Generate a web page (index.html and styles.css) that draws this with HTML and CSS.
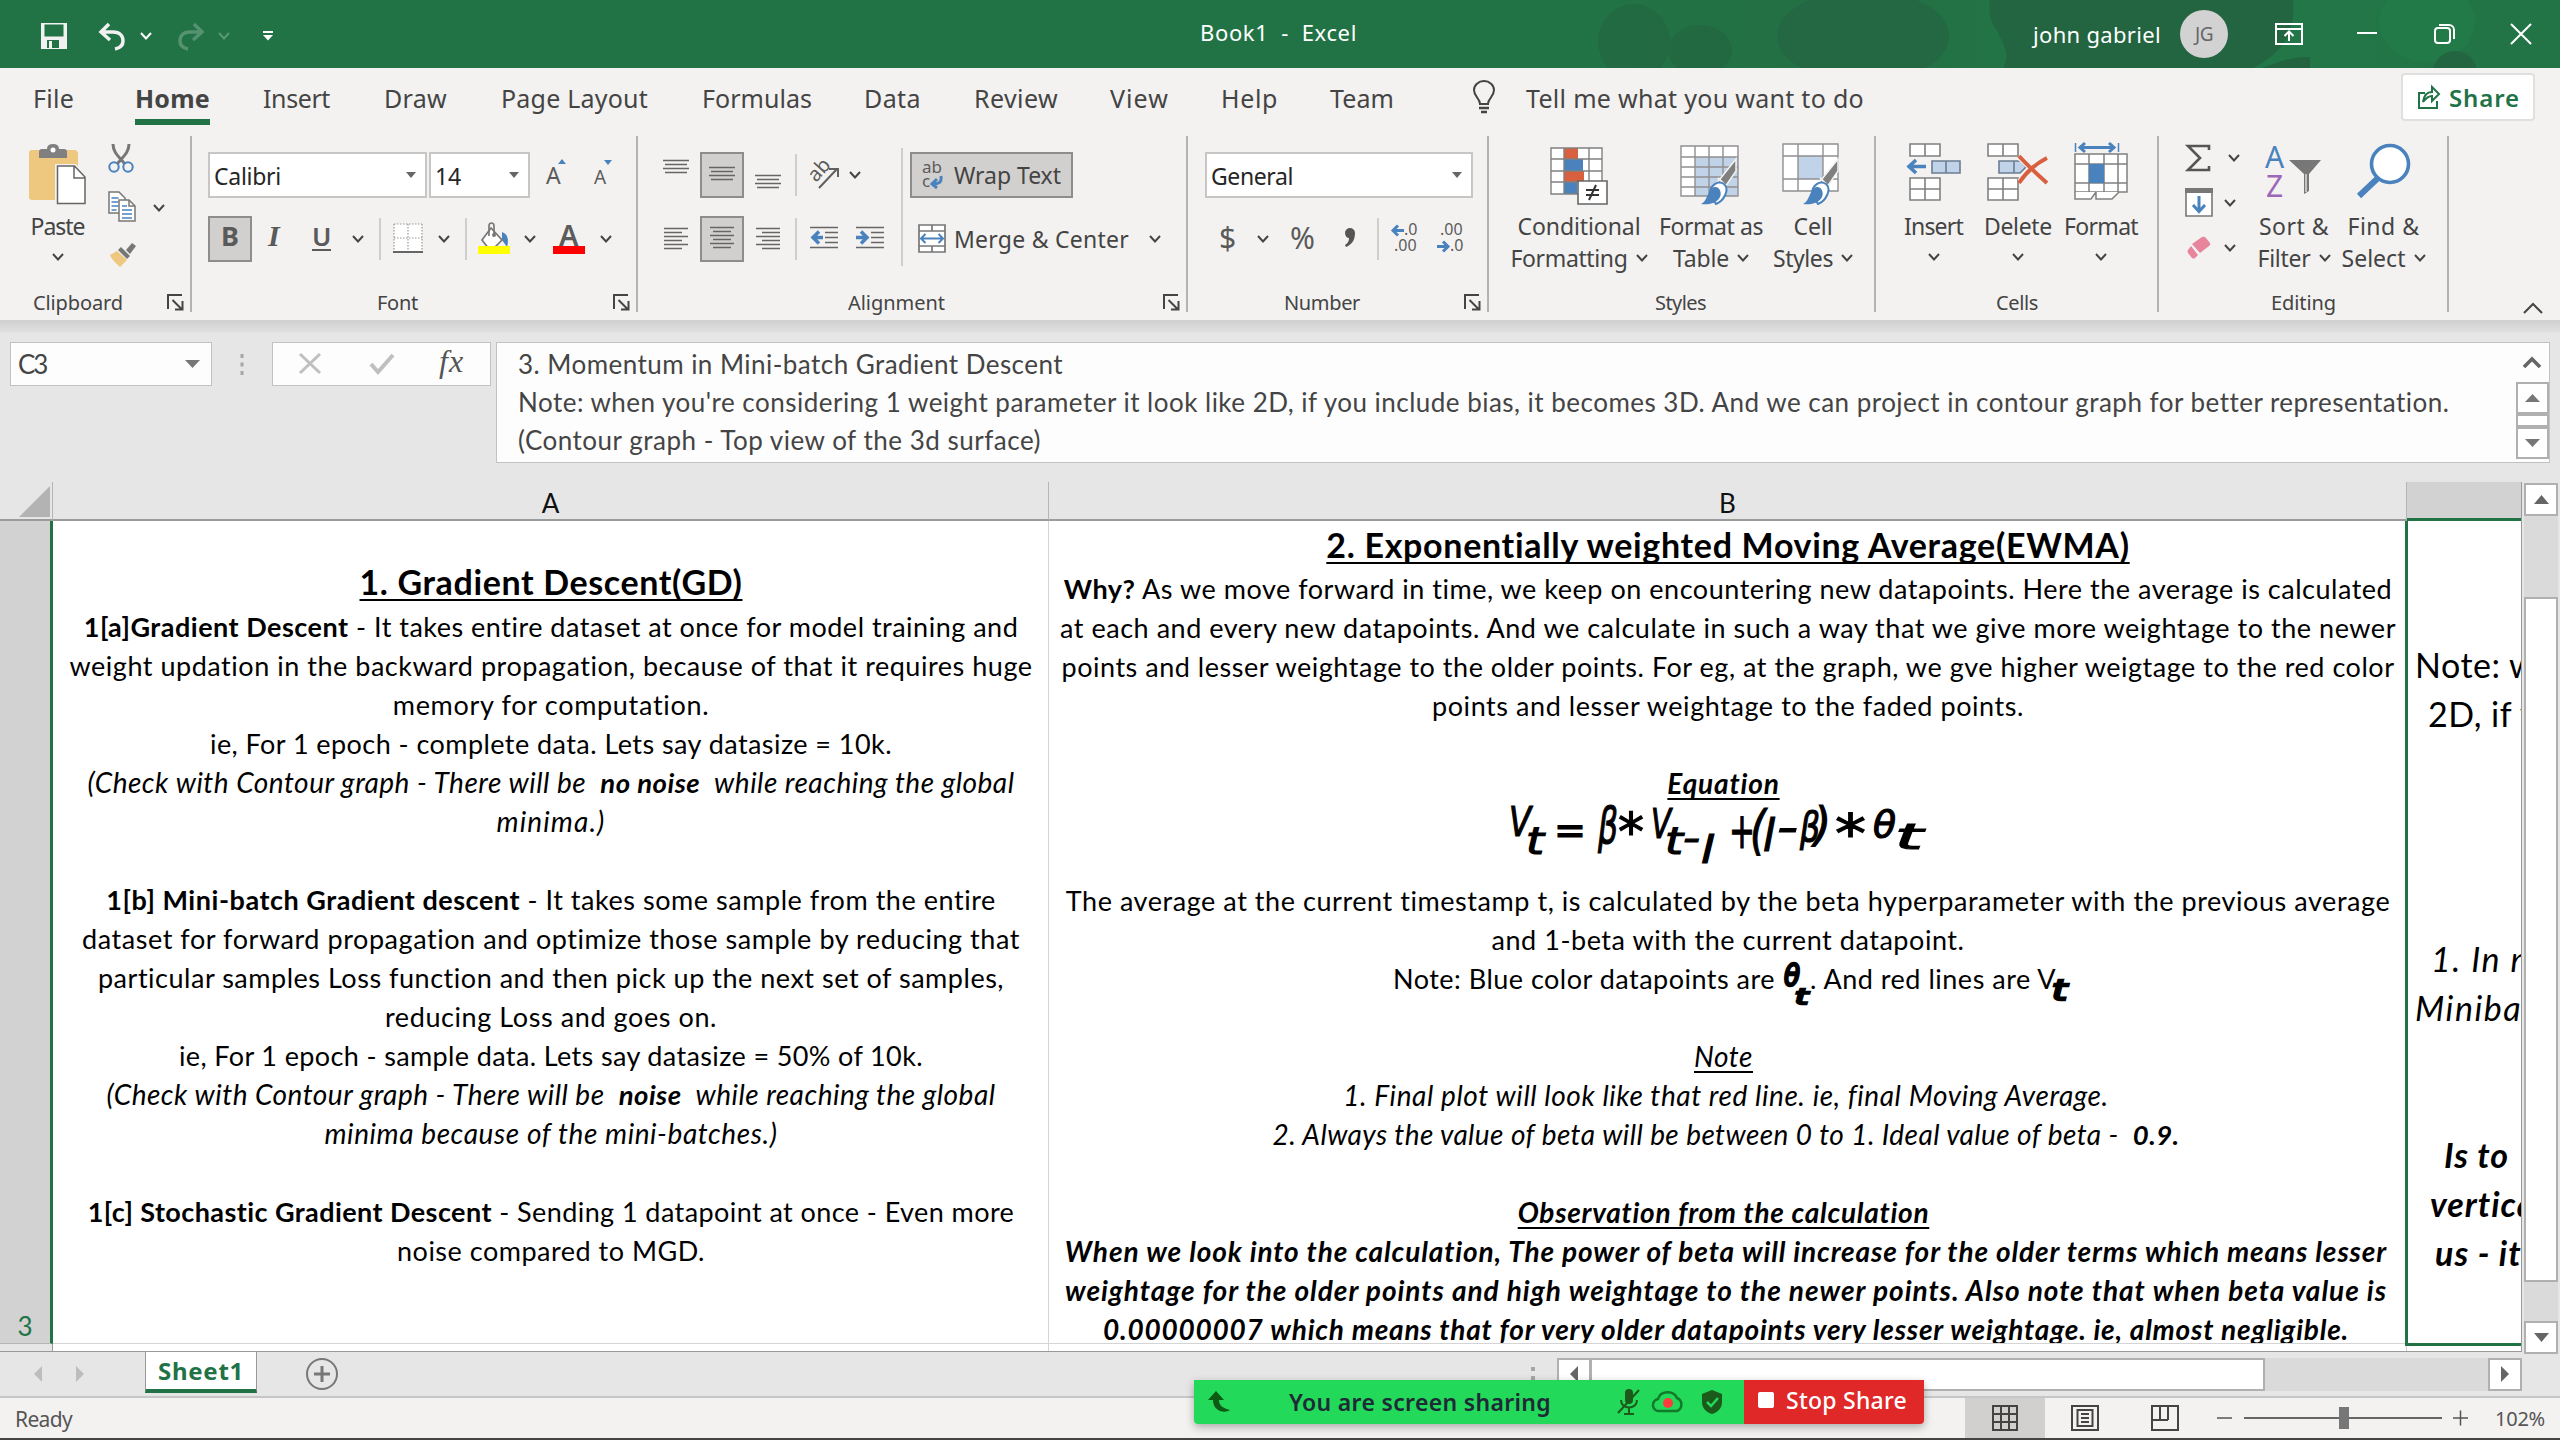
FILE: index.html
```html
<!DOCTYPE html>
<html lang="en">
<head>
<meta charset="utf-8">
<title>Book1 - Excel</title>
<link rel="stylesheet" href="styles.css">
</head>
<body>
<svg class="defs" width="0" height="0" aria-hidden="true">
  <symbol id="chev" viewBox="0 0 12 8"><path d="M1 1l5 5.5L11 1" fill="none" stroke="currentColor" stroke-width="2"/></symbol>
  <symbol id="tri" viewBox="0 0 10 6"><path d="M0 0h10L5 6z" fill="currentColor"/></symbol>
  <symbol id="launch" viewBox="0 0 17 17"><path d="M1 15V1h14M5.5 6l9 9M15.500 7v8.500H8" fill="none" stroke="#444" stroke-width="2"/></symbol>
  <symbol id="brush" viewBox="0 0 36 48"><path d="M35 2v12L22 33l-7-6z" fill="#808080" stroke="#f3f2f1" stroke-width="1.500"/><path d="M17 21l8 8" stroke="#f3f2f1" stroke-width="2"/><path d="M9 37c0-9 8-14 14-10 6 5 0 17-8 20z" fill="#fff" stroke="#4a82bd" stroke-width="2"/><path d="M0 47c7-3 6-14 13-17 6-1 8 6 6 10-3 6-10 8-19 7z" fill="#4a82bd"/></symbol>
</svg>

<header class="titlebar">
  <svg class="titlebar-art" width="1010" height="68" viewBox="1550 0 1010 68">
    <defs><linearGradient id="fade" x1="0" x2="1"><stop offset="0" stop-color="#217346"/><stop offset=".3" stop-color="#236f44"/><stop offset=".6" stop-color="#227848"/><stop offset="1" stop-color="#227346"/></linearGradient></defs>
    <path d="M1550 0h1010v68h-1010z" fill="url(#fade)"/>
    <g fill="#236540" opacity=".6"><ellipse cx="1634" cy="42" rx="36" ry="38"/><ellipse cx="1700" cy="50" rx="32" ry="25"/></g>
    <ellipse cx="1863" cy="36" rx="86" ry="46" fill="#236842"/>
    <path d="M1990 0h303c2 26-4 50-40 68h-250c8-14 0-24-5-36-8-10-10-22-8-32z" fill="#236540"/>
    <path d="M2262 68c14-5 30-12 48-11v11z" fill="#23633f"/>
    <ellipse cx="2427" cy="22" rx="48" ry="40" fill="#237a49"/>
    <ellipse cx="2455" cy="72" rx="22" ry="21" fill="#236540"/>
  </svg>
  <div class="qat">
    <svg width="26" height="26" viewBox="0 0 26 26"><path d="M0 0h26v26H0z" fill="#f1f1f1"/><path d="M3.500 1.500h19v12h-19zM6 17h12v8H6z" fill="#217346"/><path d="M8 18h3v7H8z" fill="#f1f1f1"/></svg>
    <svg width="28" height="27" viewBox="0 0 28 27"><path d="M11 1L3 9l9 8M3 9h12c7 0 10 4 10 9 0 4-3 7-8 8" fill="none" stroke="#f1f1f1" stroke-width="3.500"/></svg>
    <svg class="white" width="12" height="8"><use href="#chev"/></svg>
    <svg class="faint" width="28" height="27" viewBox="0 0 28 27"><path d="M17 1l8 8-9 8M25 9H13c-7 0-10 4-10 9 0 4 3 7 8 8" fill="none" stroke="#f1f1f1" stroke-width="3.500"/></svg>
    <svg class="white faint" width="12" height="8"><use href="#chev"/></svg>
    <svg width="10" height="10" viewBox="0 0 10 10"><path d="M0 0h10v2H0zM0 4h10L5 9.500z" fill="#fff"/></svg>
  </div>
  <div class="doc-title" data-w="157">Book1 &nbsp;- &nbsp;Excel</div>
  <div class="account"><span data-w="128">john gabriel</span><span class="avatar">JG</span></div>
  <div class="window-buttons">
    <svg width="28" height="22" viewBox="0 0 28 22"><path d="M1 1h26v20H1zM1 6h26M14 18V9M9.500 13L14 8.500l4.500 4.500" fill="none" stroke="#fff" stroke-width="2"/></svg>
    <svg width="20" height="22" viewBox="0 0 20 22"><path d="M0 10h20" stroke="#fff" stroke-width="2"/></svg>
    <svg width="22" height="22" viewBox="0 0 22 22"><rect x="1" y="5" width="15" height="15" rx="3" fill="none" stroke="#fff" stroke-width="2"/><path d="M5 2h10a5 5 0 0 1 5 5v9" fill="none" stroke="#fff" stroke-width="2"/></svg>
    <svg width="22" height="22" viewBox="0 0 22 22"><path d="M1 1l20 20M21 1L1 21" stroke="#fff" stroke-width="2"/></svg>
  </div>
</header>

<nav class="tabs">
  <span data-w="41">File</span>
  <span class="active" data-w="75">Home</span>
  <span data-w="67">Insert</span>
  <span data-w="63">Draw</span>
  <span data-w="147">Page Layout</span>
  <span data-w="110">Formulas</span>
  <span data-w="57">Data</span>
  <span data-w="84">Review</span>
  <span data-w="59">View</span>
  <span data-w="57">Help</span>
  <span data-w="64">Team</span>
  <svg width="24" height="34" viewBox="0 0 24 34"><path d="M8 24c0-6-6-7-6-14a10 9 0 0 1 20 0c0 7-6 8-6 14z" fill="none" stroke="#444" stroke-width="2"/><path d="M7 28h10M9 32h6" stroke="#444" stroke-width="2.500"/></svg>
  <span data-w="338">Tell me what you want to do</span>
  <button class="share">
    <svg width="24" height="26" viewBox="0 0 24 26"><path d="M8 9H2v15h18v-7" fill="none" stroke="#217346" stroke-width="2"/><path d="M6 18c1-7 4-10 9-10V3l7 7-7 7v-5c-4 0-6 2-9 6z" fill="none" stroke="#217346" stroke-width="2"/></svg>
    <span data-w="71">Share</span>
  </button>
</nav>

<section class="ribbon">
  <div class="group g-clipboard">
    <div class="clip-body">
      <div class="big">
        <svg width="58" height="74" viewBox="0 0 58 74"><path d="M3 14h42q4 0 4 4v46H3q-3 0-3-3V17q0-3 3-3z" fill="#edc87e"/><path d="M10 22v-6q0-3 3-3h5q0-5 6-5t6 5h5q3 0 3 3v6z" fill="#808080"/><circle cx="24" cy="14" r="2.500" fill="#fff"/><path d="M28 30h18l11 11v27H28z" fill="#fff" stroke="#f3f2f1" stroke-width="4"/><path d="M28.500 30h17L56 41v26.500H28.500zM45 30v12h11" fill="#fff" stroke="#666" stroke-width="1.500"/></svg>
        <span data-w="54">Paste</span>
        <svg width="12" height="8"><use href="#chev"/></svg>
      </div>
      <div class="clip-side">
        <svg width="26" height="30" viewBox="0 0 26 30"><path d="M5 0c0 8 5 12 12 20M21 0c0 8-5 12-12 20" fill="none" stroke="#777" stroke-width="3"/><circle cx="6" cy="23" r="4.700" fill="none" stroke="#4a82bd" stroke-width="2"/><circle cx="20" cy="23" r="4.700" fill="none" stroke="#4a82bd" stroke-width="2"/></svg>
        <svg width="58" height="32" viewBox="0 0 58 32"><path d="M1 1h10l6 6v15H1z" fill="#fff" stroke="#777" stroke-width="1.500"/><path d="M3.500 7h7M3.500 11h7M3.500 15h7M3.500 19h5" stroke="#4a82bd" stroke-width="1.500"/><path d="M11 9h10l6 6v15H11z" fill="#fff" stroke="#777" stroke-width="1.500"/><path d="M21 9v6h6" fill="none" stroke="#777" stroke-width="1.500"/><path d="M14 15h5M14 19h10M14 23h10M14 27h10" stroke="#4a82bd" stroke-width="1.500"/><path d="M46 14l5 5.500L56 14" fill="none" stroke="#444" stroke-width="2"/></svg>
        <svg width="26" height="24" viewBox="0 0 26 24"><path d="M16 7l6-7 4 3-6 8z" fill="#777"/><path d="M11 4l9 9-3 3-9-9z" fill="#777"/><path d="M7 8l10 9-7 7C6 20 2 17 0 12z" fill="#edc87e"/></svg>
      </div>
    </div>
    <div class="caption"><span data-w="90">Clipboard</span><svg width="17" height="17"><use href="#launch"/></svg></div>
  </div>

  <div class="group g-font">
    <div class="row font-1">
      <div class="combo"><span data-w="67">Calibri</span><svg width="10" height="6"><use href="#tri"/></svg></div>
      <div class="combo"><span data-w="26">14</span><svg width="10" height="6"><use href="#tri"/></svg></div>
      <svg width="24" height="46" viewBox="0 0 24 46"><text class="glyph" x="0" y="32" font-size="23">A</text><path d="M12 12l4-5 4 5z" fill="#4a82bd"/></svg>
      <svg width="24" height="46" viewBox="0 0 24 46"><text class="glyph" x="0" y="32" font-size="19">A</text><path d="M10 8h8l-4 5z" fill="#4a82bd"/></svg>
    </div>
    <div class="row font-2">
      <div class="tog"><b>B</b></div>
      <i class="ital">I</i>
      <span class="under">U</span>
      <svg width="12" height="8"><use href="#chev"/></svg>
      <span class="sep"></span>
      <svg width="30" height="46" viewBox="0 0 30 46"><path d="M1 8h28v28H1z" fill="#fff"/><path d="M1 8h28M1 8v28M29 8v28M15 8v28M1 22h28" stroke="#999" stroke-width="1.200" stroke-dasharray="1.500 1.500"/><path d="M0 36h30" stroke="#666" stroke-width="2"/></svg>
      <svg width="12" height="8"><use href="#chev"/></svg>
      <span class="sep"></span>
      <svg width="34" height="46" viewBox="0 0 34 46"><path d="M24 16c6 2 7 8 5 15l-5-7z" fill="#4a82bd"/><path d="M13 12l11 12-9 9q-2 2-4 0l-7-9z" fill="#fff" stroke="#777" stroke-width="1.700"/><path d="M11 20V10q0-3 2.500-3T16 10v9" fill="none" stroke="#777" stroke-width="1.700"/><circle cx="16" cy="19" r="2" fill="#777"/><path d="M0 30h32v8H0z" fill="#ff0"/></svg>
      <svg width="12" height="8"><use href="#chev"/></svg>
      <svg width="32" height="46" viewBox="0 0 32 46"><text class="glyph" x="6" y="30" font-size="29" font-weight="600">A</text><path d="M0 30h32v8H0z" fill="red"/></svg>
      <svg width="12" height="8"><use href="#chev"/></svg>
    </div>
    <div class="caption"><span data-w="41">Font</span><svg width="17" height="17"><use href="#launch"/></svg></div>
  </div>

  <div class="group g-align">
    <div class="align-body">
      <div class="align-left">
        <div class="row align-1">
          <svg width="26" height="46" viewBox="0 0 26 46"><path d="M0 8.500h26M2 12.500h22M0 16.500h26M2 20.500h22" stroke="#666" stroke-width="1.500"/></svg>
          <div class="tog"><svg width="26" height="42" viewBox="0 2 26 42"><path d="M0 15.500h26M2 19.500h22M0 23.500h26M2 27.500h22" stroke="#666" stroke-width="1.500"/></svg></div>
          <svg width="26" height="46" viewBox="0 0 26 46"><path d="M0 23.500h26M2 27.500h22M0 31.500h26M2 35.500h22" stroke="#666" stroke-width="1.500"/></svg>
          <span class="sep"></span>
          <svg width="32" height="46" viewBox="0 0 32 46"><text class="glyph" font-size="20" transform="translate(6 31) rotate(-48)">ab</text><path d="M9 36l18-19M19 17h9v8" fill="none" stroke="#606060" stroke-width="2"/></svg>
          <svg width="12" height="8"><use href="#chev"/></svg>
        </div>
        <div class="row align-2">
          <svg width="26" height="46" viewBox="0 0 26 46"><path d="M0 12.500h24M0 16.500h18M0 20.500h24M0 24.500h18M0 28.500h24M0 32.500h18" stroke="#666" stroke-width="1.500"/></svg>
          <div class="tog"><svg width="26" height="42" viewBox="0 2 26 42"><path d="M1 11.500h24M4 15.500h18M1 19.500h24M4 23.500h18M1 27.500h24M4 31.500h18" stroke="#666" stroke-width="1.500"/></svg></div>
          <svg width="26" height="46" viewBox="0 0 26 46"><path d="M1 12.500h24M7 16.500h18M1 20.500h24M7 24.500h18M1 28.500h24M7 32.500h18" stroke="#666" stroke-width="1.500"/></svg>
          <span class="sep"></span>
          <svg width="28" height="46" viewBox="0 0 28 46"><path d="M0 11.500h28M15 16.500h13M15 21.500h13M15 26.500h13M0 31.500h28" stroke="#666" stroke-width="1.500"/><path d="M13 21.500H3M9 15.500l-6 6 6 6" fill="none" stroke="#4a82bd" stroke-width="3.500"/></svg>
          <svg width="28" height="46" viewBox="0 0 28 46"><path d="M0 11.500h28M15 16.500h13M15 21.500h13M15 26.500h13M0 31.500h28" stroke="#666" stroke-width="1.500"/><path d="M0 21.500h10M5 15.500l6 6-6 6" fill="none" stroke="#4a82bd" stroke-width="3.500"/></svg>
        </div>
      </div>
      <span class="tall-sep"></span>
      <div class="align-right">
        <div class="wrap-btn">
          <svg width="24" height="42" viewBox="0 0 24 42"><text class="glyph" x="0" y="19" font-size="17">ab</text><text class="glyph" x="0" y="33" font-size="17">c</text><path d="M19 22c1 7-3 8-8 8M15 25l-5 5 5 4" fill="none" stroke="#4a82bd" stroke-width="3"/></svg>
          <span data-w="107">Wrap Text</span>
        </div>
        <div class="merge-btn">
          <svg width="28" height="46" viewBox="0 0 28 46"><path d="M1 9h26v27H1zM1 15h26M1 30h26M14 9v6M14 30v6" fill="#fff" stroke="#777" stroke-width="1.700"/><path d="M3 22.500h22M7.500 18L3 22.500l4.500 4.500M20.500 18l4.500 4.500-4.500 4.500" fill="none" stroke="#4a82bd" stroke-width="2"/></svg>
          <span data-w="175">Merge &amp; Center</span>
          <svg width="12" height="8"><use href="#chev"/></svg>
        </div>
      </div>
    </div>
    <div class="caption"><span data-w="97">Alignment</span><svg width="17" height="17"><use href="#launch"/></svg></div>
  </div>

  <div class="group g-number">
    <div class="row number-1"><div class="combo"><span data-w="82">General</span><svg width="10" height="6"><use href="#tri"/></svg></div></div>
    <div class="row number-2">
      <span class="sym dollar">$</span>
      <svg width="12" height="8"><use href="#chev"/></svg>
      <span class="sym" data-w="27">%</span>
      <svg width="14" height="46" viewBox="0 0 14 46"><path d="M1 17a5 5 0 0 1 10 0c0 8-4 12-9 14l-1-2c3-2 4-4 4-7-2 0-4-2-4-5z" fill="#555"/></svg>
      <span class="sep"></span>
      <svg width="30" height="46" viewBox="0 0 30 46"><text class="glyph" x="13" y="19" font-size="16">.0</text><text class="glyph" x="3" y="35" font-size="16">.00</text><path d="M13 14.500H3M7 9.500l-5 5 5 5" fill="none" stroke="#4a82bd" stroke-width="3"/></svg>
      <svg width="30" height="46" viewBox="0 0 30 46"><text class="glyph" x="3" y="19" font-size="16">.00</text><text class="glyph" x="13" y="35" font-size="16">.0</text><path d="M0 30.500h10M6 25.500l5 5-5 5" fill="none" stroke="#4a82bd" stroke-width="3"/></svg>
    </div>
    <div class="caption"><span data-w="76">Number</span><svg width="17" height="17"><use href="#launch"/></svg></div>
  </div>

  <div class="group g-styles">
    <div class="bigs">
      <div class="big">
        <svg width="58" height="74" viewBox="0 0 58 74"><path d="M.8 12h51v46h-51z" fill="#fff"/><path d="M14 12h14v11H14zM14 35h20v11H14z" fill="#d9603f"/><path d="M14 23h19v12H14zM14 46h13v12H14z" fill="#4a82bd"/><path d="M1 12h51v46H1zM14 12v46M39 12v46M1 23h51M1 35h51M1 46h51" fill="none" stroke="#808080" stroke-width="1.400"/><path d="M28 45h29v23H28z" fill="#fff" stroke="#666" stroke-width="1.600"/><path d="M36 54h13M36 59h13M46 49l-7 15" stroke="#333" stroke-width="2"/></svg>
        <span data-w="123">Conditional</span>
        <span class="l2"><span data-w="117">Formatting</span><svg width="12" height="8"><use href="#chev"/></svg></span>
      </div>
      <div class="big">
        <svg width="62" height="74" viewBox="0 0 62 74"><path d="M1 10h57v50H1z" fill="#fff"/><path d="M15 21h43v39H15z" fill="#c0d3e8"/><path d="M1 10h57v50H1zM15 10v50M29 10v50M43 10v50M1 21h57M1 31h57M1 41h57M1 51h57" fill="none" stroke="#909090" stroke-width="1.400"/><use href="#brush" x="16" y="21" width="46" height="48"/></svg>
        <span data-w="104">Format as</span>
        <span class="l2"><span data-w="56">Table</span><svg width="12" height="8"><use href="#chev"/></svg></span>
      </div>
      <div class="big">
        <svg width="62" height="74" viewBox="0 0 62 74"><path d="M1 8h55v47H1z" fill="#fff"/><path d="M16 20h25v23H16z" fill="#c0d3e8"/><path d="M1 8h55v47H1zM16 8v47M41 8v47M1 20h55M1 43h55" fill="none" stroke="#909090" stroke-width="1.400"/><use href="#brush" x="16" y="21" width="46" height="48"/></svg>
        <span data-w="39">Cell</span>
        <span class="l2"><span data-w="60">Styles</span><svg width="12" height="8"><use href="#chev"/></svg></span>
      </div>
    </div>
    <div class="caption"><span data-w="51">Styles</span></div>
  </div>

  <div class="group g-cells">
    <div class="bigs">
      <div class="big">
        <svg width="56" height="74" viewBox="0 0 56 74"><path d="M4 8h30v12H4zM19 8v12M4 42h30v22H4zM19 42v22M4 53h30" fill="#fff" stroke="#808080" stroke-width="1.600"/><path d="M26 25h28v12H26zM40 25v12" fill="#c0d3e8" stroke="#6b7d92" stroke-width="1.600"/><path d="M20 30.500H3M10 24l-7 6.500 7 6.500" fill="none" stroke="#4a82bd" stroke-width="3.600"/></svg>
        <span data-w="59">Insert</span>
        <svg width="12" height="8"><use href="#chev"/></svg>
      </div>
      <div class="big">
        <svg width="62" height="74" viewBox="0 0 62 74"><path d="M1 8h30v12H1zM16 8v12M1 42h30v22H1zM16 42v22M1 53h30" fill="#fff" stroke="#808080" stroke-width="1.600"/><path d="M12 25h22l5 6-6 6H12zM27 25v12" fill="#c0d3e8" stroke="#6b7d92" stroke-width="1.600"/><path d="M32 20l28 27M59 22L33 46" stroke="#f3f2f1" stroke-width="7"/><path d="M32 20c9 10 18 18 28 27M60 22c-12 6-20 13-28 25" fill="none" stroke="#d9603f" stroke-width="4"/></svg>
        <span data-w="68">Delete</span>
        <svg width="12" height="8"><use href="#chev"/></svg>
      </div>
      <div class="big">
        <svg width="54" height="74" viewBox="0 0 54 74"><path d="M1 18h52v38H1z" fill="#fff"/><path d="M1 18h52v38H1zM15 18v38M30 18v38M44 18v38M1 28h52M1 47h52" fill="none" stroke="#808080" stroke-width="1.500"/><path d="M15 28h15v19H15z" fill="#4a82bd"/><path d="M1 56v7h16l5-7M22 56v7h16l7-7" fill="#fff" stroke="#808080" stroke-width="1.500"/><path d="M1.500 7v9M44.500 7v9" stroke="#4a82bd" stroke-width="1.500"/><path d="M6 11.500h34M11 7l-5 4.500 5 4.500M35 7l5 4.500-5 4.500" fill="none" stroke="#4a82bd" stroke-width="3"/></svg>
        <span data-w="74">Format</span>
        <svg width="12" height="8"><use href="#chev"/></svg>
      </div>
    </div>
    <div class="caption"><span data-w="42">Cells</span></div>
  </div>

  <div class="group g-edit">
    <div class="edit-body">
      <div class="edit-side">
        <div><svg width="26" height="28" viewBox="0 0 26 28"><path d="M24 6V2H3l12 12L3 26h21v-4" fill="none" stroke="#555" stroke-width="2.600"/></svg><svg class="wide" width="12" height="8"><use href="#chev"/></svg></div>
        <div><svg width="28" height="30" viewBox="0 0 28 30"><path d="M1 1h26v27H1z" fill="#fff" stroke="#777" stroke-width="1.600"/><path d="M0 0h28v5H0z" fill="#777"/><path d="M14 8v15M8 17l6 6.500 6-6.500" fill="none" stroke="#4a82bd" stroke-width="3"/></svg><svg width="12" height="8"><use href="#chev"/></svg></div>
        <div><svg width="28" height="24" viewBox="0 0 28 24"><path d="M17 1q2-1 4 1l4 5q1 2-1 3l-9 7-8-9z" fill="#e6859b"/><path d="M6 10l7 9-3 3q-2 1-3 0l-4-5q-1-2 0-3z" fill="#e6859b"/></svg><svg width="12" height="8"><use href="#chev"/></svg></div>
      </div>
      <div class="big">
        <svg width="56" height="74" viewBox="0 0 56 74"><text x="-1" y="32" font-size="30" fill="#4a82bd">A</text><text x="0" y="61" font-size="30" fill="#9b67b9">Z</text><path d="M23 24h32L43 38v17l-5 3V38z" fill="#777"/><path d="M40 38v18" stroke="#ddd" stroke-width="1.500"/></svg>
        <span data-w="70">Sort &amp;</span>
        <span class="l2"><span data-w="53">Filter</span><svg width="12" height="8"><use href="#chev"/></svg></span>
      </div>
      <div class="big">
        <svg width="56" height="74" viewBox="0 0 56 74"><path d="M22 42L3 60" stroke="#4a82bd" stroke-width="6"/><circle cx="34" cy="28" r="18.500" fill="#fff" stroke="#4a82bd" stroke-width="3.600"/></svg>
        <span data-w="72">Find &amp;</span>
        <span class="l2"><span data-w="64">Select</span><svg width="12" height="8"><use href="#chev"/></svg></span>
      </div>
    </div>
    <div class="caption"><span data-w="65">Editing</span></div>
  </div>
  <svg class="collapse" width="20" height="12" viewBox="0 0 20 12"><path d="M1 11l9-9 9 9" fill="none" stroke="#444" stroke-width="2"/></svg>
</section>

<section class="formula-bar">
  <div class="name-box"><span data-w="28">C3</span><svg width="15" height="8" viewBox="0 0 10 6" preserveAspectRatio="none"><path d="M0 0h10L5 6z" fill="#777"/></svg></div>
  <svg width="4" height="46" viewBox="0 0 4 46"><path d="M2 12v22" stroke="#a6a6a6" stroke-width="3" stroke-dasharray="4 4.500"/></svg>
  <div class="fx-box">
    <svg width="22" height="22" viewBox="0 0 22 22"><path d="M1 1l20 19M21 1L1 20" stroke="#bfbfbf" stroke-width="3"/></svg>
    <svg width="26" height="22" viewBox="0 0 26 22"><path d="M2 11l7 8L24 2" fill="none" stroke="#bfbfbf" stroke-width="4"/></svg>
    <i class="fx">fx</i>
  </div>
  <div class="formula">
    <div class="formula-text">
      <div><span data-w="545">3. Momentum in Mini-batch Gradient Descent</span></div>
      <div><span data-w="1931">Note: when you're considering 1 weight parameter it look like 2D, if you include bias, it becomes 3D. And we can project in contour graph for better representation.</span></div>
      <div><span data-w="523">(Contour graph - Top view of the 3d surface)</span></div>
    </div>
    <div class="formula-scroll">
      <svg width="20" height="12" viewBox="0 0 20 12"><path d="M2 11l8-8 8 8" fill="none" stroke="#666" stroke-width="3.600"/></svg>
      <div class="mini"><svg width="15" height="8" viewBox="0 0 10 6" preserveAspectRatio="none"><path d="M0 6h10L5 0z" fill="#777"/></svg></div>
      <div class="mini thumb"></div>
      <div class="mini"><svg width="15" height="8" viewBox="0 0 10 6" preserveAspectRatio="none"><path d="M0 0h10L5 6z" fill="#777"/></svg></div>
    </div>
  </div>
</section>

<main class="sheet">
  <div class="grid">
    <div class="corner"><svg width="32" height="32" viewBox="0 0 32 32"><path d="M31 0v31H0z" fill="#b3b3b3"/></svg></div>
    <div class="col-head">A</div>
    <div class="col-head">B</div>
    <div class="col-head selected"></div>
    <div class="row-head"><span>3</span></div>
    <div class="cell cell-a">
      <div class="line head"><span data-w="383">1. Gradient Descent(GD)</span></div>
      <div class="line"><span data-w="935"><b>1[a]Gradient Descent</b> - It takes entire dataset at once for model training and</span></div>
      <div class="line"><span data-w="964">weight updation in the backward propagation, because of that it requires huge</span></div>
      <div class="line"><span data-w="317">memory for computation.</span></div>
      <div class="line"><span data-w="682">ie, For 1 epoch - complete data. Lets say datasize = 10k.</span></div>
      <div class="line"><i data-w="927">(Check with Contour graph - There will be &nbsp;<b>no noise</b> &nbsp;while reaching the global</i></div>
      <div class="line"><i data-w="109">minima.)</i></div>
      <div class="line"></div>
      <div class="line"><span data-w="890"><b>1[b] Mini-batch Gradient descent</b> - It takes some sample from the entire</span></div>
      <div class="line"><span data-w="939">dataset for forward propagation and optimize those sample by reducing that</span></div>
      <div class="line"><span data-w="907">particular samples Loss function and then pick up the next set of samples,</span></div>
      <div class="line"><span data-w="332">reducing Loss and goes on.</span></div>
      <div class="line"><span data-w="744">ie, For 1 epoch - sample data. Lets say datasize = 50% of 10k.</span></div>
      <div class="line"><i data-w="889">(Check with Contour graph - There will be &nbsp;<b>noise</b> &nbsp;while reaching the global</i></div>
      <div class="line"><i data-w="453">minima because of the mini-batches.)</i></div>
      <div class="line"></div>
      <div class="line"><span data-w="927"><b>1[c] Stochastic Gradient Descent</b> - Sending 1 datapoint at once - Even more</span></div>
      <div class="line"><span data-w="308">noise compared to MGD.</span></div>
    </div>
    <div class="cell cell-b">
      <div class="line head"><span data-w="804">2. Exponentially weighted Moving Average(EWMA)</span></div>
      <div class="line"><span data-w="1329"><b>Why?</b> As we move forward in time, we keep on encountering new datapoints. Here the average is calculated</span></div>
      <div class="line"><span data-w="1336">at each and every new datapoints. And we calculate in such a way that we give more weightage to the newer</span></div>
      <div class="line"><span data-w="1333">points and lesser weightage to the older points. For eg, at the graph, we gve higher weigtage to the red color</span></div>
      <div class="line"><span data-w="592">points and lesser weightage to the faded points.</span></div>
      <div class="line"></div>
      <div class="line sub"><b><i data-w="112">Equation</i></b></div>
      <div class="line"></div>
      <div class="line"></div>
      <div class="line"><span data-w="1325">The average at the current timestamp t, is calculated by the beta hyperparameter with the previous average</span></div>
      <div class="line"><span data-w="473">and 1-beta with the current datapoint.</span></div>
      <div class="line note"><span data-w="382">Note: Blue color datapoints are</span><span data-w="246">. And red lines are V</span></div>
      <div class="line"></div>
      <div class="line sub"><i data-w="59">Note</i></div>
      <div class="line late"><i data-w="765">1. Final plot will look like that red line. ie, final Moving Average.</i></div>
      <div class="line late"><i data-w="907">2. Always the value of beta will be between 0 to 1. Ideal value of beta - &nbsp;<b>0.9.</b></i></div>
      <div class="line"></div>
      <div class="line sub"><b><i data-w="411">Observation from the calculation</i></b></div>
      <div class="line late"><b><i data-w="1322">When we look into the calculation, The power of beta will increase for the older terms which means lesser</i></b></div>
      <div class="line late"><b><i data-w="1322">weightage for the older points and high weightage to the newer points. Also note that when beta value is</i></b></div>
      <div class="line late"><b><i data-w="1246">0.00000007 which means that for very older datapoints very lesser weightage. ie, almost negligible.</i></b></div>
      <svg class="ink" width="880" height="220" viewBox="1480 796 880 220">
        <text x="1509" y="836" font-size="40" textLength="22" lengthAdjust="spacingAndGlyphs">V</text>
        <text x="1526" y="854" font-size="37" textLength="18" lengthAdjust="spacingAndGlyphs">t</text>
        <text x="1554" y="844" font-size="40" textLength="32" lengthAdjust="spacingAndGlyphs">=</text>
        <text x="1598" y="843" font-size="50" textLength="20" lengthAdjust="spacingAndGlyphs">β</text>
        <text x="1618" y="850" font-size="52" textLength="26" lengthAdjust="spacingAndGlyphs">*</text>
        <text x="1651" y="838" font-size="40" textLength="20" lengthAdjust="spacingAndGlyphs">V</text>
        <text x="1665" y="854" font-size="38" textLength="18" lengthAdjust="spacingAndGlyphs">t</text>
        <text x="1683" y="850" font-size="36" textLength="17" lengthAdjust="spacingAndGlyphs">-</text>
        <text x="1701" y="863" font-size="37" textLength="13" lengthAdjust="spacingAndGlyphs">l</text>
        <text x="1729" y="848" font-size="50" textLength="26" lengthAdjust="spacingAndGlyphs">+</text>
        <text x="1750" y="849" font-size="54" textLength="16" lengthAdjust="spacingAndGlyphs">(</text>
        <text x="1763" y="851" font-size="44" textLength="12" lengthAdjust="spacingAndGlyphs">l</text>
        <text x="1777" y="842" font-size="40" textLength="21" lengthAdjust="spacingAndGlyphs">-</text>
        <text x="1800" y="841" font-size="40" textLength="20" lengthAdjust="spacingAndGlyphs">β</text>
        <text x="1814" y="840" font-size="46" textLength="17" lengthAdjust="spacingAndGlyphs">)</text>
        <text x="1835" y="852" font-size="54" textLength="31" lengthAdjust="spacingAndGlyphs">*</text>
        <text x="1873" y="837" font-size="38" textLength="23" lengthAdjust="spacingAndGlyphs">θ</text>
        <text x="1895" y="849" font-size="36" textLength="28" lengthAdjust="spacingAndGlyphs">t</text>
        <text class="thick" x="1784" y="986" font-size="30" textLength="16" lengthAdjust="spacingAndGlyphs">θ</text>
        <text class="thick" x="1795" y="1004" font-size="22" textLength="13" lengthAdjust="spacingAndGlyphs">t</text>
        <text class="thick" x="2052" y="1000" font-size="28" textLength="15" lengthAdjust="spacingAndGlyphs">t</text>
      </svg>
    </div>
    <div class="cell cell-c">
      <div class="big-line c1">Note: w</div>
      <div class="big-line c2">2D, if y</div>
      <div class="big-line"></div><div class="big-line"></div><div class="big-line"></div><div class="big-line"></div>
      <div class="big-line c3"><i>1. In n</i></div>
      <div class="big-line c4"><i>Miniba</i></div>
      <div class="big-line"></div><div class="big-line"></div>
      <div class="big-line c5"><b><i>Is to</i></b></div>
      <div class="big-line c6"><b><i>vertica</i></b></div>
      <div class="big-line c7"><b><i>us - it</i></b></div>
    </div>
    <div class="next next-head"></div><div class="next"></div><div class="next"></div><div class="next last"></div>
  </div>
  <div class="vscroll">
    <div class="btn"><svg width="15" height="9" viewBox="0 0 15 9"><path d="M0 9h15L7.500 0z" fill="#666"/></svg></div>
    <div class="vthumb"></div>
    <div class="btn"><svg width="15" height="9" viewBox="0 0 15 9"><path d="M0 0h15L7.500 9z" fill="#666"/></svg></div>
  </div>
</main>

<section class="sheet-tabs">
  <svg width="8" height="16" viewBox="0 0 8 16"><path d="M8 0v16L0 8z" fill="#bdbdbd"/></svg>
  <svg width="8" height="16" viewBox="0 0 8 16"><path d="M0 0v16l8-8z" fill="#bdbdbd"/></svg>
  <div class="sheet-tab"><span data-w="86">Sheet1</span></div>
  <svg width="32" height="32" viewBox="0 0 32 32"><circle cx="16" cy="16" r="15" fill="none" stroke="#777" stroke-width="2"/><path d="M16 8v16M8 16h16" stroke="#777" stroke-width="3"/></svg>
  <svg width="4" height="14" viewBox="0 0 4 14"><path d="M0 0h4v4H0zM0 9h4v4H0z" fill="#a6a6a6"/></svg>
  <div class="hscroll">
    <div class="btn"><svg width="8" height="16" viewBox="0 0 8 16"><path d="M8 0v16L0 8z" fill="#666"/></svg></div>
    <div class="hthumb"></div>
    <div class="btn"><svg width="8" height="16" viewBox="0 0 8 16"><path d="M0 0v16l8-8z" fill="#666"/></svg></div>
  </div>
</section>

<footer class="status">
  <span class="ready" data-w="57">Ready</span>
  <div class="view on"><svg width="26" height="26" viewBox="0 0 26 26"><path d="M1 1h24v24H1zM9 1v24M17 1v24M1 9h24M1 17h24" fill="none" stroke="#444" stroke-width="2"/></svg></div>
  <div class="view"><svg width="28" height="26" viewBox="0 0 28 26"><path d="M1 1h26v24H1zM6.500 5h15v16h-15zM10 9h8M10 13h8M10 17h8" fill="none" stroke="#444" stroke-width="2"/></svg></div>
  <div class="view"><svg width="28" height="26" viewBox="0 0 28 26"><path d="M1 1h26v24H1zM9 1v14M17 1v14M1 15h16" fill="none" stroke="#444" stroke-width="2"/></svg></div>
  <svg class="zoom" width="252" height="24" viewBox="0 0 252 24"><path d="M0 12h15M236 12h15M243.500 4.500v15" stroke="#555" stroke-width="1.500"/><path d="M27 12h198" stroke="#666" stroke-width="2"/><path d="M122 1h10v22h-10z" fill="#777"/></svg>
  <span class="pct" data-w="50">102%</span>
</footer>
<div class="edge"></div>

<div class="share-bar">
  <div class="sharing">
    <svg width="22" height="22" viewBox="0 0 22 22"><path d="M8 0l8 9h-5c0 5 3 8 11 10-6 4-17 1-17-10H0z" fill="#0c5a14"/></svg>
    <span data-w="262">You are screen sharing</span>
    <svg width="23" height="26" viewBox="0 0 23 26"><rect x="8" y="0" width="8" height="15" rx="4" fill="#1c5a1c"/><path d="M4 11c0 10 16 10 16 0M12 18v6M7 25h10M22 1L1 24" fill="none" stroke="#1c5a1c" stroke-width="2"/></svg>
    <svg width="32" height="24" viewBox="0 0 32 24"><path d="M8 21a6 6 0 0 1-2-12A10 9 0 0 1 25 8a7 7 0 0 1 0 13z" fill="none" stroke="#137a2c" stroke-width="2.500"/><circle cx="16" cy="13" r="5" fill="#ff3b3b"/></svg>
    <svg width="22" height="24" viewBox="0 0 22 24"><path d="M11 0l10 4v8c0 6-4 10-10 12C5 22 1 18 1 12V4z" fill="#1c5a1c"/><path d="M6 12l4 4 7-8" fill="none" stroke="#23d959" stroke-width="2.500"/></svg>
  </div>
  <div class="stop"><i class="square"></i><span data-w="121">Stop Share</span></div>
</div>
<script src="fit.js"></script>
</body>
</html>
```
FILE: styles.css
```css
* { box-sizing: border-box; }
body { margin: 0; width: 2560px; height: 1440px; overflow: hidden; position: relative; display: flex; flex-direction: column; background: #e6e6e6; color: #444; font-family: "Noto Sans", "Open Sans", sans-serif; font-size: 23px; }
svg { display: block; flex: none; overflow: visible; }
.defs { position: absolute; }
[data-w] { display: inline-block; white-space: pre; }
.glyph { fill: #5c5c5c; }

/* title bar */
.titlebar { position: relative; height: 68px; flex: none; background: #217346; color: #fff; display: grid; grid-template-columns: 1200px 833px 242px 1fr; align-items: center; }
.titlebar > div { position: relative; }
.titlebar-art { position: absolute; right: 0; top: 0; overflow: hidden; }
.qat { padding: 4px 0 0 41px; display: grid; grid-template-columns: 57px 42px 37px 41px 45px 10px; align-items: center; }
.white { color: #fff; }
.faint { opacity: .25; }
.doc-title { font-size: 22px; line-height: 30px; justify-self: start; margin-top: -4px; }
.account { display: flex; align-items: center; gap: 19px; font-size: 22px; }
.avatar { width: 48px; height: 48px; border-radius: 50%; background: #d2d2d2; color: #666; font-size: 19px; line-height: 48px; text-align: center; letter-spacing: -.5px; }
.window-buttons { display: grid; grid-template-columns: 82px 77px 76px 22px; align-items: center; }

/* tabs */
.tabs { height: 58px; flex: none; background: #f3f2f1; padding-left: 33px; display: grid; grid-template-columns: 102px 128px 121px 117px 201px 162px 110px 136px 111px 109px 142px 54px 875px 134px; align-items: center; justify-items: start; font-size: 25px; }
.tabs > span { line-height: 56px; height: 56px; padding-top: 1px; }
.tabs .active { font-weight: 700; box-shadow: inset 0 -6px #217346; }
.share { width: 134px; height: 48px; padding: 0 0 0 14px; border: 2px solid #e1dfdd; border-radius: 4px; background: #fff; color: #217346; font: 600 24px "Noto Sans", sans-serif; display: flex; align-items: center; gap: 8px; }

/* ribbon */
.ribbon { height: 194px; flex: none; background: #f3f2f1; padding-top: 10px; display: flex; align-items: flex-start; }
.group { height: 176px; border-right: 2px solid #b5b3b1; display: flex; flex-direction: column; }
.g-clipboard { width: 192px; }
.g-font { width: 446px; }
.g-align { width: 550px; }
.g-number { width: 301px; }
.g-styles { width: 387px; }
.g-cells { width: 283px; }
.g-edit { width: 290px; }
.collapse { margin: 166px 0 0 74px; }
.caption { margin-top: auto; height: 20px; line-height: 24px; font-size: 20px; display: flex; justify-content: space-between; align-items: center; padding-right: 6px; }
.caption span { position: relative; top: 1px; }
.g-clipboard .caption { padding-left: 33px; }
.g-font .caption { padding-left: 185px; }
.g-align .caption { padding-left: 210px; }
.g-number .caption { padding-left: 96px; }
.g-styles .caption { padding-left: 166px; }
.g-cells .caption { padding-left: 120px; }
.g-edit .caption { padding-left: 112px; }
.row { height: 46px; margin-bottom: 18px; display: grid; align-items: center; justify-items: start; }
.g-font, .g-number { padding-top: 16px; }
.big { display: flex; flex-direction: column; align-items: center; line-height: 32px; }
.big > svg:nth-child(3) { margin-top: 11px; }
.l2 { display: flex; align-items: center; gap: 8px; white-space: nowrap; }
.combo { width: 100%; height: 46px; border: 2px solid #c8c6c4; background: #fff; color: #262626; display: flex; align-items: center; justify-content: space-between; padding: 2px 9px 0 4px; }
.combo svg { color: #666; margin-top: -3px; }
.tog { width: 44px; height: 46px; border: 2px solid #8f8d8b; background: #d2d0ce; display: flex; align-items: center; justify-content: center; }
.sep { width: 2px; height: 42px; background: #d0cecc; }

.clip-body { display: grid; grid-template-columns: 107px 60px; }
.clip-body .big { padding-left: 8px; }
.clip-side { padding: 8px 0 0 1px; display: flex; flex-direction: column; }
.clip-side svg:nth-child(2) { margin-top: 17px; }
.clip-side svg:nth-child(3) { margin: 20px 0 0 2px; }

.font-1 { padding-left: 16px; grid-template-columns: 219px 2px 101px 16px 48px 24px; }
.font-1 > :nth-child(2) { grid-column: 3; }
.font-1 > :nth-child(3) { grid-column: 5; }
.font-2 { padding-left: 16px; grid-template-columns: 60px 44px 40px 27px 14px 45px 27px 13px 46px 29px 47px 12px; }
.tog b { font-size: 27px; line-height: 38px; margin-top: -6px; color: #5a5a5a; }
.ital { font: italic 600 30px "Liberation Serif", serif; color: #5a5a5a; line-height: 40px; margin-top: -6px; }
.under { font-size: 26px; font-weight: 600; line-height: 27px; color: #5a5a5a; border-bottom: 2px solid #5a5a5a; margin-top: -5px; height: 28px; }

.align-body { display: flex; }
.align-left { width: 263px; padding-top: 16px; }
.align-1 { padding-left: 25px; grid-template-columns: 37px 55px 40px 15px 39px 12px; }
.align-2 { padding-left: 26px; grid-template-columns: 36px 55px 40px 15px 46px 28px; }
.tall-sep { width: 2px; height: 118px; margin-top: 12px; background: #d0cecc; }
.align-right { padding: 16px 0 0 7px; }
.wrap-btn { width: 163px; height: 46px; border: 2px solid #8f8d8b; background: #d2d0ce; display: flex; align-items: center; gap: 8px; padding-left: 10px; margin-bottom: 18px; }
.merge-btn { height: 46px; display: grid; grid-template-columns: 36px 195px 12px; align-items: center; justify-items: start; padding-left: 8px; }

.number-1 { padding-left: 17px; grid-template-columns: 268px; }
.number-2 { padding-left: 31px; grid-template-columns: 38px 33px 54px 33px 14px 46px 28px; }
.sym { font-size: 30px; line-height: 40px; margin-top: -3px; color: #5a5a5a; }

.bigs { display: grid; }
.g-styles .bigs { margin-left: 22px; grid-template-columns: 136px 128px 76px; }
.g-cells .bigs { margin-left: 16px; grid-template-columns: 83px 86px 80px; }
.edit-body { display: grid; grid-template-columns: 92px 86px 93px; }
.edit-side { padding: 7px 0 0 26px; }
.edit-side div { display: flex; align-items: center; gap: 11px; height: 30px; margin-bottom: 15px; }
.edit-side .wide { margin-left: 6px; }

/* formula bar */
.formula-bar { height: 162px; flex: none; padding: 22px 0 0 10px; display: grid; grid-template-columns: 230px 32px 224px 2054px; align-items: start; background: linear-gradient(#cfcfcf, #e0e0e0 12px, #e6e6e6 13px); font-family: Lato, sans-serif; font-size: 26px; }
.name-box { width: 202px; height: 44px; border: 1px solid #c2c2c2; background: #fdfdfd; display: flex; align-items: center; justify-content: space-between; padding: 0 11px 0 7px; }
.fx-box { width: 219px; height: 44px; border: 1px solid #c2c2c2; background: #fdfdfd; display: grid; grid-template-columns: 70px 70px 30px; align-items: center; padding-left: 26px; }
.fx { font: italic 32px "Liberation Serif", serif; color: #555; margin-top: -6px; letter-spacing: 1px; }
.formula { width: 2054px; height: 121px; border: 1px solid #c2c2c2; background: #fdfdfd; display: flex; justify-content: space-between; }
.formula-text { padding: 2px 0 0 21px; line-height: 38px; }
.formula-scroll { width: 34px; padding-right: 0; display: flex; flex-direction: column; align-items: center; }
.formula-scroll > svg { margin: 13px 0 14px; }
.mini { width: 33px; height: 32px; border: 2px solid #b0b0b0; background: #fff; display: flex; align-items: center; justify-content: center; flex: none; }
.mini.thumb { height: 13px; }

/* worksheet */
.sheet { height: 870px; flex: none; display: flex; }
.grid { width: 2522px; height: 870px; display: grid; grid-template-columns: 53px 996px 1358px 115px; grid-template-rows: 39px 823px 8px; border-bottom: 1px solid #999; border-right: 1px solid #999; overflow: hidden; }
.corner, .col-head { border-bottom: 2px solid #9b9b9b; border-right: 1px solid #b5b5b5; background: #e6e6e6; }
.corner { padding: 4px 0 0 19px; }
.col-head { font: 26px/42px Lato, sans-serif; color: #111; text-align: center; }
.col-head.selected { background: #d2d2d2; border-bottom: 3px solid #217346; border-right: 0; }
.row-head { background: #d2d2d2; border-right: 3px solid #217346; border-bottom: 1px solid #b5b5b5; display: flex; align-items: flex-end; justify-content: center; font: 26px/34px Lato, sans-serif; color: #217346; }
.cell { background: #fff; color: #000; border-right: 1px solid #d4d4d4; border-bottom: 1px solid #d4d4d4; font: 27px Lato, sans-serif; text-align: center; overflow: hidden; }
.line { height: 39px; line-height: 39px; white-space: nowrap; }
.line.head { font-size: 34px; font-weight: 700; height: 49px; line-height: 48px; }
.line i { font-size: 28px; line-height: 38px; }
.line i b { font-size: 27.5px; }
.head span, .sub i { text-decoration: underline 2px; text-underline-offset: 4px; text-decoration-skip-ink: none; }
.cell-a { padding-top: 37px; padding-left: 1px; }
.cell-b { position: relative; border-right: 0; }
.cell-b .head { height: 48px; line-height: 47px; }
.cell-b .sub { padding-right: 9px; }
.cell-b .late { padding-right: 4px; }
.note { display: flex; justify-content: center; gap: 35px; padding-right: 7px; }
.ink { position: absolute; left: 431px; top: 275px; font-family: "DejaVu Sans", sans-serif; stroke: #000; stroke-width: 1.2px; font-style: oblique 6deg; }
.thick { stroke-width: 2.5px; }
.cell-c { border: 0 solid #217346; border-width: 0 0 3px 3px; margin: 0 0 -2px -2px; padding-top: 119px; text-align: left; position: relative; }
.big-line { height: 49px; line-height: 49px; font-size: 34px; letter-spacing: .5px; white-space: nowrap; }
.c1 { padding-left: 7px; } .c2 { padding-left: 20px; } .c3 { padding-left: 23px; letter-spacing: 1.5px; } .c4 { padding-left: 7px; letter-spacing: 1.5px; }
.c5 { padding-left: 36px; letter-spacing: 1px; } .c6 { padding-left: 22px; letter-spacing: 1px; } .c7 { padding-left: 27px; letter-spacing: 1px; }
.next { background: #fff; border-right: 1px solid #d4d4d4; }
.next-head { background: #e6e6e6; border-color: #999; }
.next.last { border: 0; }
.btn { width: 34px; height: 33px; flex: none; border: 2px solid #b0b0b0; background: #fff; display: flex; align-items: center; justify-content: center; }
.vscroll { margin: 1px 0 0 2px; width: 34px; height: 871px; background: #dadada; display: flex; flex-direction: column; justify-content: space-between; }
.vthumb { height: 685px; margin-top: 42px; border: 2px solid #b0b0b0; background: #fff; }

/* sheet tabs */
.sheet-tabs { height: 44px; flex: none; padding-left: 34px; display: grid; grid-template-columns: 42px 69px 161px 1225px 27px 964px; align-items: center; }
.sheet-tab { width: 112px; height: 41px; align-self: start; background: #fff; border: 1px solid #999; border-width: 0 1px; border-bottom: 4px solid #217346; color: #217346; font-weight: 700; font-size: 24px; line-height: 38px; text-align: center; }
.hscroll { width: 964px; height: 33px; background: #dadada; display: flex; align-self: center; }
.hscroll .btn:first-child { margin-left: -1px; }
.hthumb { width: 675px; margin: 0 auto 0 -1px; border: 2px solid #b0b0b0; background: #fff; }

/* status bar */
.status { height: 42px; flex: none; border-top: 2px solid #c6c6c6; background: #f3f2f1; display: flex; align-items: center; font-size: 20px; color: #555; }
.ready { margin: 2px 1893px 0 15px; font-size: 21px; }
.view { width: 80px; height: 40px; display: flex; align-items: center; justify-content: center; }
.view.on { background: #d2d0ce; }
.zoom { margin-left: 12px; }
.pct { margin-left: 26px; }
.edge { height: 2px; background: #444; }

/* screen sharing overlay */
.share-bar { position: absolute; left: 1194px; top: 1380px; width: 730px; height: 44px; display: flex; box-shadow: 0 3px 8px rgba(0,0,0,.3); border-radius: 0 0 4px 4px; overflow: hidden; }
.sharing { width: 550px; background: #23d959; color: #1f2a37; font-weight: 600; display: grid; grid-template-columns: 81px 328px 35px 49px 22px; align-items: center; justify-items: start; padding-left: 14px; }
.stop { width: 180px; background: #e02828; color: #fff; font-size: 23px; font-weight: 500; display: flex; align-items: center; gap: 12px; padding: 0 0 4px 14px; }
.square { width: 16px; height: 16px; border-radius: 2px; background: #fff; }
```
FILE: fit.js
```js
// Track each label so that it fills the width given in its data-w attribute.
document.querySelectorAll('[data-w]').forEach(function (el) {
  var target = Number(el.dataset.w);
  var natural = el.getBoundingClientRect().width;
  el.style.letterSpacing = ((target - natural) / el.textContent.length) + 'px';
});
```
